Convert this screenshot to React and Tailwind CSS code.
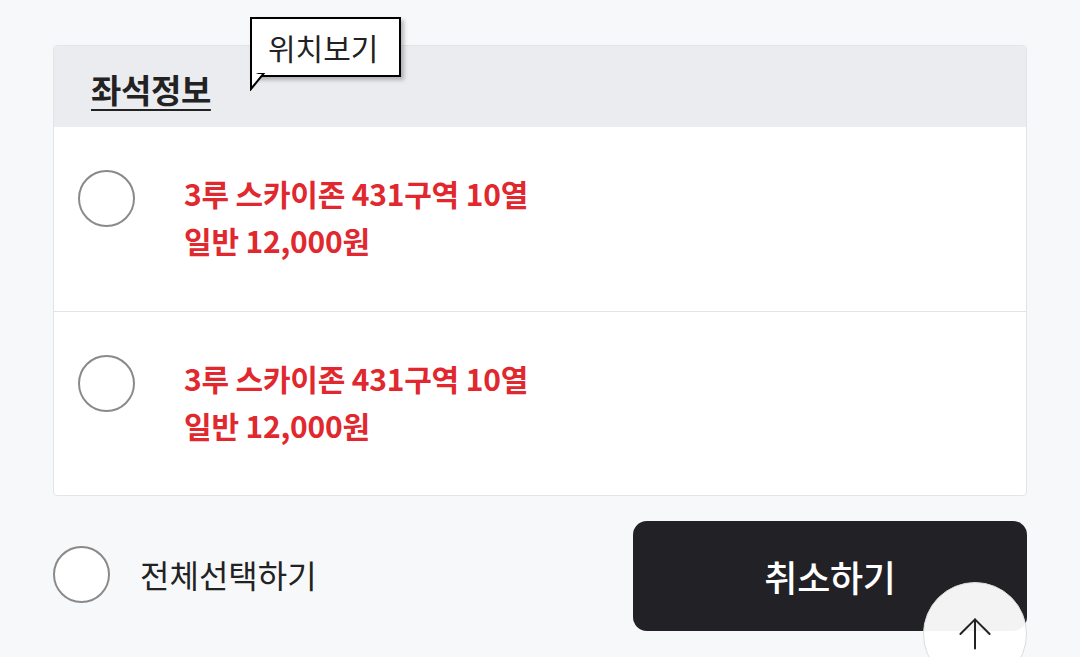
import { ArrowUp } from "lucide-react";

const seats = [
  { id: 1, title: "3루 스카이존 431구역 10열", price: "일반 12,000원" },
  { id: 2, title: "3루 스카이존 431구역 10열", price: "일반 12,000원" },
];

function Radio({ className = "" }) {
  return (
    <span
      className={`block h-[57px] w-[57px] shrink-0 rounded-full border-2 border-[#8a8a8a] bg-white ${className}`}
    />
  );
}

export default function App() {
  return (
    <div
      className="relative h-[657px] w-[1080px] overflow-hidden bg-[#f7f8fa] text-[#222]"
      style={{ fontFamily: '"Noto Sans CJK KR", "Noto Sans", sans-serif' }}
    >
      <div className="px-[53px] pt-[45px]">
        <div className="rounded-[4px] border border-[#e3e4e8] bg-white">
          <div className="relative flex h-[81px] items-center rounded-t-[4px] bg-[#ebecf0] pl-[37px]">
            <span className="mt-[6px] text-[33px] font-bold leading-none tracking-[-0.4px] text-[#222] underline decoration-2 underline-offset-[6px]">
              좌석정보
            </span>
            <div className="absolute left-[196px] top-[-29px]">
              <div className="relative border-2 border-black bg-white py-[4px] pl-[16px] pr-[21px] shadow-[3px_3px_4px_rgba(0,0,0,0.25)]">
                <span className="text-[30px] leading-[48px] text-[#222]">위치보기</span>
              </div>
              <svg
                className="absolute left-0 top-[56px]"
                width="16"
                height="18"
                viewBox="0 0 16 18"
              >
                <path d="M1 0 L1 16 L14 0 Z" fill="white" stroke="black" strokeWidth="2" />
                <path d="M2 -1 L2 2 L12 -1 Z" fill="white" />
              </svg>
            </div>
          </div>
          {seats.map((s, i) => (
            <div
              key={s.id}
              className={`flex h-[184px] items-start pl-[24px] pt-[43px] ${
                i > 0 ? "border-t border-[#e3e4e8]" : ""
              }`}
            >
              <Radio />
              <div className="ml-[49px] mt-0 text-[30px] font-bold leading-[47px] tracking-[-0.2px] text-[#e0282e]">
                <div>{s.title}</div>
                <div>{s.price}</div>
              </div>
            </div>
          ))}
        </div>
        <div className="mt-[25px] flex items-center justify-between">
          <div className="mt-[-4px] flex items-center">
            <Radio />
            <span className="ml-[30px] text-[32px] leading-none text-[#222]">전체선택하기</span>
          </div>
          <button className="flex h-[110px] w-[394px] items-center justify-center rounded-[14px] bg-[#222226] text-[36px] font-medium tracking-[-0.3px] text-white">
            취소하기
          </button>
        </div>
      </div>
      <button className="absolute left-[923px] top-[582px] flex h-[104px] w-[104px] items-start justify-center rounded-full border border-[#dcdcdc] bg-white/95 pt-[26px] text-[#222]">
        <ArrowUp size={50} strokeWidth={2} absoluteStrokeWidth />
      </button>
    </div>
  );
}
